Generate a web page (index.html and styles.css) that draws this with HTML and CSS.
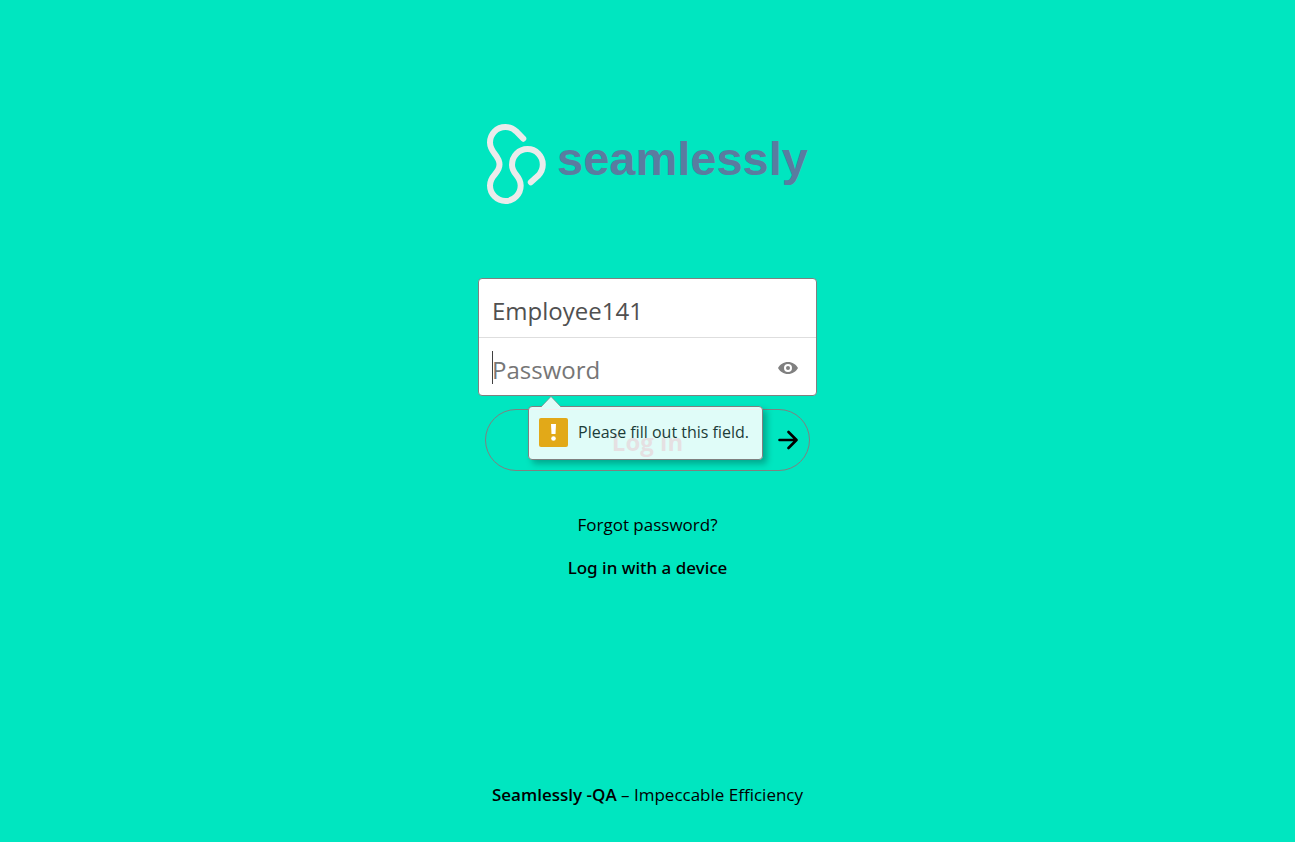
FILE: index.html
```html
<!DOCTYPE html>
<html lang="en">
<head>
  <meta charset="utf-8">
  <meta name="viewport" content="width=device-width, initial-scale=1">
  <title>Seamlessly - Log in</title>
  <link rel="stylesheet" href="styles.css">
</head>
<body>
  <main class="login">
    <h1 class="logo">
      <svg class="logo-art" viewBox="0 0 321 80" width="321" height="80">
        <path class="logo-mark" d="M36.3 14.7 L29 7.2 C26 4.4 22.5 3 18.5 3 C9.5 3 3 10 3 18.5 C3 29 12.500 31 12.500 40.500 C12.500 50 3 50.500 3 61.500 C3 70 10 77 18.400 77 C27 77 33.700 70 33.700 61.500 C33.700 51.500 25 50.500 25 41 C25 32 32 25 40.500 25 C49 25 55.800 32 55.800 40.500 C55.800 45.500 54 48.800 51 51.800 L43.800 58.300"/>
        <text class="logo-word" x="70" y="51">seamlessly</text>
      </svg>
    </h1>

    <form class="form" novalidate>
      <div class="fields">
        <div class="field">
          <input class="input" type="text" aria-label="Username" value="Employee141">
        </div>
        <div class="field field-password">
          <input class="input" type="password" aria-label="Password" placeholder="Password">
          <span class="caret"></span>
          <button class="reveal" type="button" aria-label="Show password">
            <svg viewBox="0 0 20 12" width="20" height="12" aria-hidden="true">
              <path fill="#808080" fill-rule="evenodd" d="M10 0 C5.500 0 2 2.500 0 6 C2 9.500 5.500 12 10 12 S18 9.500 20 6 C18 2.500 14.500 0 10 0 Z M10 2 A4 4 0 1 1 10 10 A4 4 0 1 1 10 2 Z"/>
              <circle cx="10" cy="6" r="2" fill="#808080"/>
            </svg>
          </button>
          <div class="tip" role="alert">
            <svg class="tip-arrow" viewBox="0 0 22 11" width="22" height="11" aria-hidden="true">
              <path d="M1 11 L11 0.500 L21 11" fill="#e0fcf7" stroke="#808080" stroke-width="0.700"/>
            </svg>
            <svg class="tip-icon" viewBox="0 0 29 29" width="29" height="29" aria-hidden="true">
              <rect width="29" height="29" rx="2" fill="#e2a918"/>
              <path d="M12 6 H17 L16.500 16 H12.500 Z" fill="#fff"/>
              <circle cx="14.500" cy="20.500" r="2.300" fill="#fff"/>
            </svg>
            <span>Please fill out this field.</span>
          </div>
        </div>
      </div>

      <button class="submit" type="submit">
        <span class="submit-label">Log in</span>
        <svg class="submit-arrow" viewBox="0 0 20 20" width="20" height="20" aria-hidden="true">
          <path d="M1.500 10 H18 M10.500 2 L18.500 10 L10.500 18"/>
        </svg>
      </button>
    </form>

    <nav class="links">
      <a class="link" href="#">Forgot password?</a>
      <a class="link link-strong" href="#">Log in with a device</a>
    </nav>
  </main>

  <footer class="footer"><a class="footer-name" href="#">Seamlessly -QA</a> – Impeccable Efficiency</footer>
</body>
</html>
```
FILE: styles.css
```css
* {
  box-sizing: border-box;
}

body {
  margin: 0;
  min-height: 100vh;
  display: flex;
  flex-direction: column;
  align-items: center;
  justify-content: space-between;
  background: #00e6c0;
  color: #000;
  font-family: "Segoe UI", "Open Sans", "Noto Sans", sans-serif;
  font-size: 17px;
}

.login {
  width: 100%;
  max-width: 339px;
  padding-top: 124px;
}

.logo {
  display: flex;
  justify-content: center;
  margin: 0 0 74px;
}

.logo-mark {
  fill: none;
  stroke: #ebebeb;
  stroke-width: 6;
  stroke-linecap: round;
  stroke-linejoin: round;
}

.logo-word {
  fill: #5a7ca0;
  font: bold 47px "Liberation Sans", Arial, sans-serif;
}

.fields {
  background: #fff;
  border: 1px solid #808080;
  border-radius: 4px;
}

.field {
  position: relative;
  display: flex;
  align-items: center;
  height: 58px;
  padding: 0 13px;
}

.field-password {
  border-top: 1px solid #dedede;
}

.input {
  flex: 1;
  min-width: 0;
  width: 100%;
  padding: 6px 0 0;
  border: 0;
  outline: 0;
  background: transparent;
  color: #505050;
  font: 24px/32px "Segoe UI", "Open Sans", "Noto Sans", sans-serif;
}

.input::placeholder {
  color: #767676;
  opacity: 1;
}

.caret {
  position: absolute;
  left: 13px;
  top: 13px;
  width: 1px;
  height: 33px;
  background: #404040;
}

.reveal {
  display: flex;
  margin-right: 5px;
  padding: 2px 0 0;
  border: 0;
  background: none;
}

.tip {
  position: absolute;
  z-index: 1;
  left: 49px;
  top: 68px;
  display: flex;
  align-items: center;
  gap: 10px;
  height: 54px;
  min-width: 235px;
  padding: 0 10px 2px;
  border: 1px solid #808080;
  border-radius: 4px;
  background: rgba(255, 255, 255, 0.88);
  box-shadow: 4px 4px 6px rgba(0, 80, 70, 0.4);
  color: #1c3c38;
  white-space: nowrap;
  font-size: 16px;
  line-height: 26px;
}

.tip-arrow {
  position: absolute;
  left: 11px;
  top: -11px;
}

.submit {
  display: flex;
  align-items: center;
  justify-content: center;
  position: relative;
  width: calc(100% - 14px);
  height: 62px;
  margin: 13px 7px 0;
  padding: 4px 0 0;
  border: 1px solid #808080;
  border-radius: 31px;
  background: transparent;
  color: #2a0010;
  font: bold 24px/32px "Segoe UI", "Open Sans", "Noto Sans", sans-serif;
}

.submit-arrow {
  position: absolute;
  right: 11px;
  top: 20px;
  fill: none;
  stroke: #000;
  stroke-width: 2.6;
  stroke-linecap: round;
  stroke-linejoin: round;
}

.links {
  display: flex;
  flex-direction: column;
  align-items: center;
  gap: 19px;
  margin-top: 42px;
}

.link {
  color: #000;
  line-height: 24px;
  text-decoration: none;
}

.link-strong {
  font-family: "Segoe UI", "Noto Sans", sans-serif;
  font-weight: 500;
}

.footer {
  padding-bottom: 35px;
  line-height: 24px;
}

.footer-name {
  color: #000;
  font-weight: 600;
  text-decoration: none;
}
```
